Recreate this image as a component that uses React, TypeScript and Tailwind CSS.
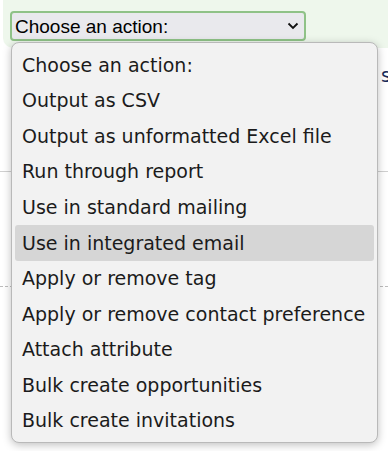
import React from "react";

const items = [
  "Choose an action:",
  "Output as CSV",
  "Output as unformatted Excel file",
  "Run through report",
  "Use in standard mailing",
  "Use in integrated email",
  "Apply or remove tag",
  "Apply or remove contact preference",
  "Attach attribute",
  "Bulk create opportunities",
  "Bulk create invitations",
];

export default function App() {
  return (
    <div className="relative w-[388px] h-[451px] overflow-hidden bg-white">
      <div className="ml-[3px] h-[48px] bg-[#eef7ec] rounded-bl-[10px] pt-[11px] pl-[7px]">
        <div
          className="w-[296px] h-[30px] border-2 border-[#8fc287] rounded-[4px] bg-[#e9e9ed] flex items-center justify-between pl-[3px] pr-[5px] text-[19px] text-black"
          style={{ fontFamily: '"Liberation Sans", Arial, sans-serif' }}
        >
          <span className="leading-none">Choose an action:</span>
          <svg width="12" height="8" viewBox="0 0 12 8">
            <path d="M1.5 1.5 L6 6 L10.5 1.5" fill="none" stroke="#111" strokeWidth="1.8" />
          </svg>
        </div>
      </div>
      <div className="h-[123px] relative">
        <span
          className="absolute left-[381px] top-[13px] text-[19px] text-[#1a2c5a]"
          style={{ fontFamily: '"DejaVu Sans", sans-serif' }}
        >
          s
        </span>
      </div>
      <div className="h-px bg-[#d0d0d0]" />
      <div className="h-[114px]" />
      <div className="border-t border-dashed border-[#bcbcbc]" />

      <div
        className="absolute left-[11px] top-[42px] w-[367px] h-[401px] bg-[#f2f2f2] border border-[#b9b9b9] rounded-[8px] shadow-[0_2px_8px_rgba(0,0,0,0.25)] px-[3px] py-[4px] text-[19px] text-[#1b1b1b]"
        style={{ fontFamily: '"DejaVu Sans", sans-serif' }}
      >
        {items.map((t, i) => (
          <div
            key={t}
            className={
              "h-[35.6px] flex items-center pl-[7px] rounded-[3px] " +
              (i === 5 ? "bg-[#d6d6d6]" : "")
            }
          >
            {t}
          </div>
        ))}
      </div>
    </div>
  );
}
